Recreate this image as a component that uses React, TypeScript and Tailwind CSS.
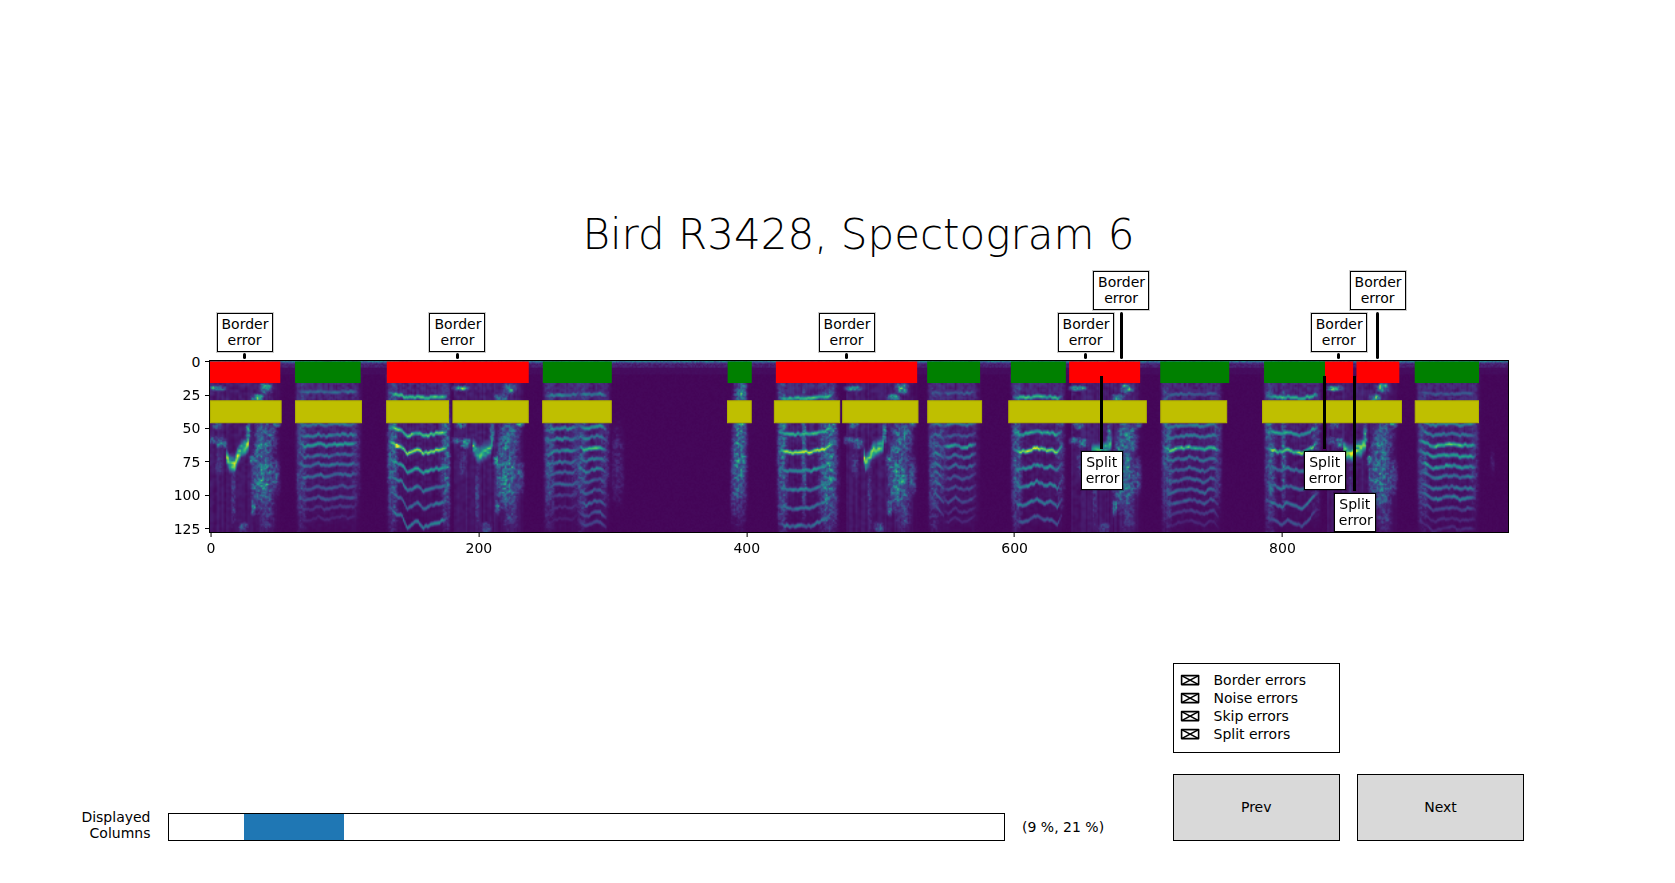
import { useEffect, useRef, useState } from 'react'

const COLS = 969
const ROWS = 128

type Point = [number, number]

interface Stack {
  from: number
  to: number
  /** Relative frequency deviation along the syllable: [progress, deviation]. */
  shape: Point[]
  /** [row, strength] of each partial. */
  partials: Point[]
  /** Strength of the noise at the onset. */
  onset: number
}

const STACKS: Stack[] = [
  {
    from: 65, to: 109, onset: 0.3,
    shape: [[0, -0.03], [0.1, 0.02], [0.25, 0.01], [0.35, -0.01], [0.47, 0.015], [0.6, 0], [0.75, -0.01], [0.85, 0], [1, -0.01]],
    partials: [[22.5, 0.33], [47, 0.38], [55, 0.42], [62, 0.52], [70, 0.32], [77, 0.38], [85, 0.36], [94, 0.24], [102, 0.26], [109, 0.16], [117, 0.1]],
  },
  {
    from: 133, to: 176, onset: 0.48,
    shape: [[0, -0.12], [0.15, -0.07], [0.22, -0.07], [0.32, 0.01], [0.45, -0.02], [0.5, -0.03], [0.6, 0.01], [0.8, -0.02], [0.9, -0.025], [1, -0.045]],
    partials: [[27, 0.68], [55, 0.7], [68, 0.85], [82, 0.58], [96, 0.42], [109, 0.36], [123, 0.42]],
  },
  {
    from: 250, to: 274, onset: 0.36,
    shape: [[0, 0.04], [0.3, 0], [0.6, -0.005], [0.8, 0.005], [1, -0.03]],
    partials: [[25, 0.45], [50, 0.45], [58, 0.46], [67, 0.46], [75.5, 0.38], [83, 0.3], [92, 0.32], [100, 0.2], [109, 0.12], [118, 0.08]],
  },
  {
    from: 274, to: 295, onset: 0.36,
    shape: [[0, -0.02], [0.3, 0.02], [0.6, -0.01], [0.8, -0.01], [1, 0.02]],
    partials: [[24.5, 0.42], [49, 0.5], [56.5, 0.42], [65, 0.66], [73, 0.42], [81, 0.4], [89, 0.3], [97, 0.28], [105.5, 0.32], [114, 0.26], [121, 0.2]],
  },
  {
    from: 424, to: 464, onset: 0.5,
    shape: [[0, -0.02], [0.2, 0], [0.3, 0], [0.45, -0.01], [0.6, 0], [0.75, -0.03], [0.85, -0.04], [1, -0.09]],
    partials: [[27.5, 0.62], [54.5, 0.64], [68, 0.88], [82, 0.52], [96, 0.42], [110, 0.36], [123.5, 0.36]],
  },
  {
    from: 537, to: 547, onset: 0.35,
    shape: [[0, 0.02], [0.4, -0.02], [1, 0.04]],
    partials: [[23, 0.26], [47, 0.4], [55, 0.36], [62, 0.34], [69, 0.44], [77, 0.46], [84, 0.36], [91, 0.36], [101, 0.34], [110, 0.26]],
  },
  {
    from: 546, to: 571, onset: 0.1,
    shape: [[0, 0], [0.2, 0.01], [0.4, -0.02], [0.6, 0.01], [0.8, 0], [1, -0.03]],
    partials: [[23.5, 0.28], [47, 0.4], [55.5, 0.28], [63.5, 0.54], [71, 0.36], [79, 0.34], [87, 0.26], [95, 0.22], [104, 0.24], [112, 0.13], [119, 0.1]],
  },
  {
    from: 599, to: 635, onset: 0.42,
    shape: [[0, -0.04], [0.1, 0], [0.2, 0.005], [0.3, -0.005], [0.5, -0.04], [0.65, -0.01], [0.8, -0.02], [0.92, 0.015], [1, -0.04]],
    partials: [[27, 0.62], [54, 0.58], [67, 0.85], [80, 0.48], [93.5, 0.46], [107, 0.42], [120, 0.26]],
  },
  {
    from: 711, to: 752, onset: 0.4,
    shape: [[0, -0.02], [0.12, 0.02], [0.25, 0], [0.35, -0.005], [0.5, -0.02], [0.65, 0], [0.75, 0.015], [0.85, -0.015], [0.93, -0.015], [1, 0.02]],
    partials: [[24.5, 0.28], [48, 0.42], [56, 0.4], [65, 0.66], [73, 0.38], [81, 0.34], [89, 0.3], [97, 0.32], [105, 0.28], [113, 0.18], [121, 0.1]],
  },
  {
    from: 788, to: 826, onset: 0.46,
    shape: [[0, -0.04], [0.15, -0.02], [0.3, 0.01], [0.4, -0.02], [0.6, 0.005], [0.7, 0.02], [0.85, -0.03], [1, -0.09]],
    partials: [[27, 0.62], [54, 0.54], [67.5, 0.76], [81, 0.38], [94.5, 0.36], [108, 0.4], [121, 0.24]],
  },
  {
    from: 902, to: 944, onset: 0.3,
    shape: [[0, -0.05], [0.15, -0.02], [0.25, 0.015], [0.4, 0], [0.6, -0.01], [0.75, 0.01], [0.85, 0], [1, 0.005]],
    partials: [[24, 0.26], [47, 0.45], [54.5, 0.4], [62.5, 0.64], [70.5, 0.54], [78.5, 0.54], [86, 0.38], [94.5, 0.36], [102, 0.4], [110, 0.22], [118, 0.12], [125, 0.12]],
  },
]

/** Calls that sweep upwards: start column and ridge of the loudest part. */
const SWEEPS: { at: number; ridge: Point[]; gain: number }[] = [
  { at: 0, ridge: [[12, 71], [14, 76], [18, 77], [20, 71], [23, 65], [26, 64], [28, 61]], gain: 0.78 },
  { at: 182, ridge: [[14, 63], [17, 69], [19, 70], [22, 67], [25, 66], [27, 64], [28, 60]], gain: 0.68 },
  { at: 475, ridge: [[13, 72], [14, 76], [17, 72], [19, 67], [23, 64], [26, 63], [27, 61]], gain: 0.75 },
  { at: 643, ridge: [[15, 68], [20, 67], [24, 66], [28, 63], [29, 61]], gain: 0.64 },
  { at: 834, ridge: [[12, 65], [14, 68], [18, 69], [21, 66], [25, 65], [28, 61]], gain: 0.8 },
]

const VIRIDIS = [
  [68, 1, 84], [72, 40, 120], [62, 73, 137], [49, 104, 142], [38, 130, 142],
  [31, 158, 137], [53, 183, 121], [110, 206, 88], [181, 222, 43], [253, 231, 37],
]

const CALLS = [
  { from: 0, to: 52.5, wrong: true },
  { from: 63.5, to: 112.5, wrong: false },
  { from: 132, to: 238, wrong: true },
  { from: 248.5, to: 300, wrong: false },
  { from: 386.5, to: 404.5, wrong: false },
  { from: 422.5, to: 528, wrong: true },
  { from: 535.5, to: 575, wrong: false },
  { from: 598, to: 639, wrong: false },
  { from: 641.5, to: 694.5, wrong: true },
  { from: 709.5, to: 761, wrong: false },
  { from: 787, to: 832.5, wrong: false },
  { from: 832.5, to: 853.5, wrong: true },
  { from: 856, to: 888, wrong: true },
  { from: 899.5, to: 947.5, wrong: false },
]

const REFERENCE_CALLS = [
  [0, 53.5], [63.5, 113.5], [131.5, 178.5], [181, 238], [248, 300], [386, 404.5],
  [421, 470.5], [472, 529], [535.5, 576.5], [596, 666], [666, 699.5],
  [709.5, 759.5], [785.5, 832], [832, 854.5], [854.5, 890], [899.5, 947.5],
]

const BORDER_ERRORS = [
  { col: 25.5, high: false },
  { col: 184.5, high: false },
  { col: 475, high: false },
  { col: 653.5, high: false },
  { col: 680, high: true },
  { col: 842.5, high: false },
  { col: 871.5, high: true },
]

const SPLIT_ERRORS = [
  { col: 665.5, low: false },
  { col: 832, low: false },
  { col: 854.5, low: true },
]

const FILTERS = ['Border errors', 'Noise errors', 'Skip errors', 'Split errors']

function hash(x: number, y: number) {
  let h = Math.imul(x, 374761393) + Math.imul(y, 668265263)
  h = Math.imul(h ^ (h >>> 13), 1274126177)
  return ((h ^ (h >>> 16)) >>> 0) / 4294967296
}

function smoothNoise(x: number, y: number, size: number) {
  const gx = Math.floor(x / size)
  const gy = Math.floor(y / size)
  const fx = x / size - gx
  const fy = y / size - gy
  const top = hash(gx, gy) * (1 - fx) + hash(gx + 1, gy) * fx
  const bottom = hash(gx, gy + 1) * (1 - fx) + hash(gx + 1, gy + 1) * fx
  return top * (1 - fy) + bottom * fy
}

function interpolate(points: Point[], t: number) {
  if (t <= points[0][0]) return points[0][1]
  for (let i = 1; i < points.length; i++) {
    if (t <= points[i][0]) {
      const [x0, y0] = points[i - 1]
      const [x1, y1] = points[i]
      return y0 + ((y1 - y0) * (t - x0)) / (x1 - x0)
    }
  }
  return points[points.length - 1][1]
}

function buildSpectrogram() {
  const field = new Float32Array(COLS * ROWS)

  const raise = (x: number, y: number, v: number) => {
    if (x < 0 || y < 0 || x >= COLS || y >= ROWS) return
    const i = y * COLS + x
    field[i] = Math.max(field[i], v) + Math.min(field[i], v) * 0.15
  }

  const patch = (cx: number, cy: number, rx: number, ry: number, v: number) => {
    for (let x = Math.floor(cx - rx * 1.6); x <= cx + rx * 1.6; x++) {
      for (let y = Math.floor(cy - ry * 1.6); y <= cy + ry * 1.6; y++) {
        const d = Math.pow(Math.abs((x - cx) / rx), 3) + Math.pow(Math.abs((y - cy) / ry), 3)
        const n = 0.75 * smoothNoise(x + 31, y + 17, 1.6) + 0.25 * hash(x + 7, y + 57)
        raise(x, y, v * Math.exp(-d * 1.2) * (0.2 + 1.5 * n * n + 0.2 * hash(x, 3)))
      }
    }
  }

  for (let x = 0; x < COLS; x++) {
    for (let y = 0; y < ROWS; y++) {
      const n = hash(x, y + 900)
      let v = 0.008 + 0.014 * n
      if (y < 1) v += 0.26 + 0.22 * n
      else if (y < 2) v += 0.08 + 0.12 * n
      else if (y < 5) v += 0.04 + 0.06 * n
      else if (y < 10) v += 0.015
      field[y * COLS + x] = v
    }
  }

  for (const s of STACKS) {
    for (let x = s.from - 2; x <= s.to + 4; x++) {
      const edge = Math.min(1, (x - s.from + 3) / 3, (s.to + 5 - x) / 5)
      const stripe = hash(x, 5)
      for (let y = 10; y < ROWS; y++) {
        const fall = 1 - y / 155
        raise(x, y, edge * fall * (0.02 + 0.05 * stripe + 0.14 * smoothNoise(x, y, 1.8)))
      }
    }
    patch(s.from + 3, 64, 4, 60, s.onset * 0.8)
    patch(s.to - 1, 62, 4, 50, s.onset * 0.5)
    for (let x = s.from; x <= s.to; x++) {
      const t = (x - s.from) / (s.to - s.from)
      const dev = interpolate(s.shape, t)
      const edge = Math.min(1, 0.35 + (x - s.from) / 7, 0.5 + (s.to - x) / 6)
      s.partials.forEach(([row, strength]) => {
        const centre = row * (1 + dev) + (hash(x >> 1, row) - 0.5) * 1.3
        const gain = strength * edge * (0.74 + 0.46 * smoothNoise(x, row * 3, 2.5))
        for (let y = Math.floor(centre) - 4; y <= centre + 4; y++) {
          const d = (y - centre) / 1.6
          raise(x, y, gain * Math.exp(-d * d))
        }
      })
    }
  }
  patch(138, 63, 5, 2, 0.7)
  patch(176, 70, 3, 56, 0.36)
  patch(461, 70, 7, 58, 0.44)
  patch(443, 64, 2, 50, 0.38)
  patch(801, 58, 2, 50, 0.42)
  patch(304, 76, 5, 30, 0.12)
  patch(395, 60, 5, 52, 0.52)
  patch(396, 22, 4, 8, 0.5)
  patch(391, 90, 3, 28, 0.24)
  patch(929, 62, 14, 1, 0.4)
  patch(957, 76, 2, 10, 0.08)

  for (const s of SWEEPS) {
    for (let x = s.at; x < s.at + 54; x++) {
      const stripe = hash(x, 7)
      const edge = Math.min(1, (s.at + 54 - x) / 8)
      for (let y = 12; y < ROWS; y++) {
        const n = smoothNoise(x, y, 2.2)
        raise(x, y, edge * (0.01 + 0.045 * stripe + 0.08 * n * (1.2 - y / 160)))
      }
    }
    patch(s.at + 5, 20, 6, 2, 0.7)
    patch(s.at + 5, 47, 4, 4, 0.4)
    patch(s.at + 2, 59, 4, 3, 0.4)
    patch(s.at + 8, 61, 4, 4, 0.56)
    patch(s.at + 6, 76, 3, 10, 0.2)
    patch(s.at + 41, 20, 5, 4, 0.62)
    patch(s.at + 35, 27, 5, 3, 0.58)
    patch(s.at + 41, 56, 8, 14, 0.4)
    patch(s.at + 37, 64, 5, 8, 0.4)
    patch(s.at + 39, 86, 8, 25, 0.48)
    patch(s.at + 31, 74, 2, 4, 0.58)
    patch(s.at + 33, 86, 3, 16, 0.32)
    patch(s.at + 32, 109, 2, 6, 0.5)
    patch(s.at + 42, 112, 6, 16, 0.2)
    patch(s.at + 49, 46, 3, 3, 0.65)
    patch(s.at + 48, 86, 4, 14, 0.28)
    patch(s.at + 17, 100, 2, 26, 0.2)
    patch(s.at + 24, 124, 4, 4, 0.3)
    patch(s.at + 28, 54, 2, 9, 0.45)
    for (let x = s.ridge[0][0]; x <= s.ridge[s.ridge.length - 1][0]; x++) {
      const centre = interpolate(s.ridge, x)
      for (let y = Math.floor(centre - 12); y <= centre + 12; y++) {
        const d = (y - centre) / 5.2
        const n = smoothNoise(s.at + x, y, 1.8)
        raise(s.at + x, y, s.gain * Math.exp(-d * d) * (0.45 + 0.9 * n))
      }
    }
  }
  return field
}

function Spectrogram() {
  const ref = useRef<HTMLCanvasElement>(null)

  useEffect(() => {
    const ctx = ref.current?.getContext('2d')
    if (!ctx) return
    const field = buildSpectrogram()
    const image = ctx.createImageData(COLS, ROWS)
    for (let i = 0; i < field.length; i++) {
      const v = Math.min(0.999, Math.max(0, field[i])) * (VIRIDIS.length - 1)
      const k = Math.floor(v)
      const f = v - k
      for (let c = 0; c < 3; c++) {
        image.data[i * 4 + c] = VIRIDIS[k][c] * (1 - f) + VIRIDIS[k + 1][c] * f
      }
      image.data[i * 4 + 3] = 255
    }
    ctx.putImageData(image, 0, 0)
  }, [])

  return <canvas ref={ref} width={COLS} height={ROWS} className="block size-full bg-[#440154]" />
}

const atCol = (col: number) => `${(col / COLS) * 100}%`
const atRow = (row: number) => `${((row + 0.5) / ROWS) * 100}%`

const LABEL = 'border border-black bg-white px-1 pt-[2px] pb-[3px] text-center leading-4 shadow-[0_0_0_1px_rgba(0,0,0,0.2)]'

function BorderError({ col, high }: { col: number; high: boolean }) {
  return (
    <div className="absolute bottom-full flex -translate-x-1/2 flex-col items-center pb-[2px]" style={{ left: atCol(col) }}>
      <div className={`${LABEL} w-14`}>
        Border
        <br />
        error
      </div>
      <div className={high ? 'mt-[2px] h-[47px] w-[3px] rounded-sm bg-black' : 'mt-[1px] h-[6px] w-[3px] rounded-sm bg-black'} />
    </div>
  )
}

function SplitError({ col, low }: { col: number; low: boolean }) {
  return (
    <div className="absolute top-[15px] flex -translate-x-1/2 flex-col items-center" style={{ left: atCol(col) }}>
      <div className={low ? 'mb-[2px] h-[115px] w-[3px] bg-black' : 'mb-[2px] h-[73px] w-[3px] bg-black'} />
      <div className={`${LABEL} w-[42px]`}>
        Split
        <br />
        error
      </div>
    </div>
  )
}

function Plot({ shown }: { shown: Record<string, boolean> }) {
  return (
    <figure className="relative ml-[12.5%] aspect-[1300/173] w-[77.6%] border border-black">
      <Spectrogram />
      <svg viewBox={`0 0 ${COLS} ${ROWS}`} preserveAspectRatio="none" className="absolute inset-0 size-full" aria-hidden="true">
        {CALLS.map((c) => (
          <rect key={c.from} x={c.from} y={0.4} width={c.to - c.from} height={16.1} fill={c.wrong ? '#ff0000' : '#008000'} />
        ))}
        {REFERENCE_CALLS.map(([from, to]) => (
          <rect key={from} x={from + 0.4} y={29.8} width={to - from - 0.8} height={16.4} fill="#bfbf00" stroke="#b0b000" strokeWidth={0.8} />
        ))}
      </svg>
      {[0, 25, 50, 75, 100, 125].map((v) => (
        <div key={v} className="absolute right-full flex -translate-y-1/2 items-center gap-[5px]" style={{ top: atRow(v) }}>
          <span className="leading-4">{v}</span>
          <span className="h-px w-[5px] bg-black" />
        </div>
      ))}
      {[0, 200, 400, 600, 800].map((v) => (
        <div key={v} className="absolute top-full flex -translate-x-1/2 flex-col items-center gap-[3px]" style={{ left: atCol(v + 0.5) }}>
          <span className="h-[5px] w-px bg-black" />
          <span className="leading-4">{v}</span>
        </div>
      ))}
      {shown['Border errors'] && BORDER_ERRORS.map((e) => <BorderError key={e.col} {...e} />)}
      {shown['Split errors'] && SPLIT_ERRORS.map((e) => <SplitError key={e.col} {...e} />)}
    </figure>
  )
}

const THUMB =
  'pointer-events-none absolute inset-0 m-0 size-full cursor-pointer appearance-none bg-transparent [&::-webkit-slider-thumb]:pointer-events-auto [&::-webkit-slider-thumb]:h-6 [&::-webkit-slider-thumb]:w-2 [&::-webkit-slider-thumb]:appearance-none [&::-webkit-slider-thumb]:bg-transparent'

export default function App() {
  const [range, setRange] = useState<[number, number]>([9, 21])
  const [shown, setShown] = useState<Record<string, boolean>>(Object.fromEntries(FILTERS.map((f) => [f, true])))
  const [low, high] = range

  return (
    <main className="flex min-h-screen flex-col bg-white pb-[42px] font-['DejaVu_Sans',sans-serif] text-[14px] text-black">
      <h1 className="mt-[210px] mr-[10%] ml-[12.5%] text-center font-['DejaVu_Sans_Light','DejaVu_Sans',sans-serif] text-[42px] leading-[50px] font-extralight">
        Bird R3428, Spectogram 6
      </h1>
      <div className="mt-[100px]">
        <Plot shown={shown} />
      </div>

      <section className="mt-auto grid grid-cols-[10%_50%_10%_10%_1%_10%] items-end pt-16">
        <fieldset className="col-start-4 mb-[21px] border border-black px-[7px] pt-[7px] pb-[9px]">
          {FILTERS.map((name) => (
            <label key={name} className="flex items-center gap-[15px] leading-[18px]">
              <span className="relative h-[10px] w-[18px]">
                <input
                  type="checkbox"
                  checked={shown[name]}
                  onChange={(e) => setShown({ ...shown, [name]: e.target.checked })}
                  className="block size-full appearance-none"
                />
                <svg viewBox="0 0 18 10" className="pointer-events-none absolute inset-0 size-full overflow-visible" fill="none" stroke="#000" strokeWidth="1.6" strokeLinejoin="round" aria-hidden="true">
                  <rect x="0.6" y="0.6" width="17" height="9" />
                  {shown[name] && <path d="M0.6 0.6 17.6 9.6M17.6 0.6 0.6 9.6" />}
                </svg>
              </span>
              {name}
            </label>
          ))}
        </fieldset>

        <div id="columns-label" className="col-start-1 row-start-2 pr-[17px] text-right leading-4">
          Displayed
          <br />
          Columns
        </div>
        <div role="group" aria-labelledby="columns-label" className="relative row-start-2 h-7 border border-black">
          <div className="h-full bg-[#1f77b4]" style={{ marginLeft: `${low}%`, width: `${high - low}%` }} />
          <input
            type="range"
            aria-label="First displayed column"
            value={low}
            onChange={(e) => setRange([Math.min(+e.target.value, high), high])}
            className={THUMB}
          />
          <input
            type="range"
            aria-label="Last displayed column"
            value={high}
            onChange={(e) => setRange([low, Math.max(+e.target.value, low)])}
            className={THUMB}
          />
        </div>
        <output className="row-start-2 pl-[17px] leading-7 whitespace-nowrap">
          ({low} %, {high} %)
        </output>
        <button type="button" className="row-start-2 h-[67px] border border-black bg-[#d9d9d9] hover:bg-[#f2f2f2]">
          Prev
        </button>
        <button type="button" className="col-start-6 row-start-2 h-[67px] border border-black bg-[#d9d9d9] hover:bg-[#f2f2f2]">
          Next
        </button>
      </section>
    </main>
  )
}
